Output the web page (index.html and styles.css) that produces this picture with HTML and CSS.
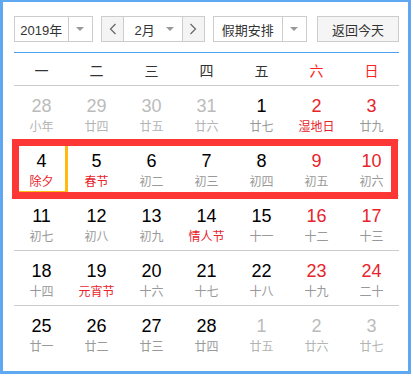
FILE: index.html
```html
<!DOCTYPE html>
<html lang="zh-CN">
<head>
    <meta charset="UTF-8">
    <meta name="viewport" content="width=device-width, initial-scale=1.0">
    <title>万年历</title>
    <link rel="stylesheet" href="styles.css">
</head>
<body>
    <div class="calendar">
        <div class="toolbar">
            <div class="select year">
                <span class="select-value">2019年</span>
                <span class="select-arrow"><i class="caret"></i></span>
            </div>
            <div class="month-group">
                <button class="nav-btn">
                    <svg width="8" height="12" viewBox="0 0 8 12"><polyline points="6.5,1 1.5,6 6.5,11" fill="none" stroke="#666" stroke-width="1.2"/></svg>
                </button>
                <div class="month">
                    <span>2月</span>
                    <i class="caret"></i>
                </div>
                <button class="nav-btn">
                    <svg width="8" height="12" viewBox="0 0 8 12"><polyline points="1.5,1 6.5,6 1.5,11" fill="none" stroke="#666" stroke-width="1.2"/></svg>
                </button>
            </div>
            <div class="select holiday">
                <span class="select-value">假期安排</span>
                <span class="select-arrow"><i class="caret"></i></span>
            </div>
            <button class="today-btn">返回今天</button>
        </div>

        <div class="weekdays">
            <span>一</span>
            <span>二</span>
            <span>三</span>
            <span>四</span>
            <span>五</span>
            <span class="weekend">六</span>
            <span class="weekend">日</span>
        </div>

        <div class="week">
            <div class="day other"><b>28</b><small>小年</small></div>
            <div class="day other"><b>29</b><small>廿四</small></div>
            <div class="day other"><b>30</b><small>廿五</small></div>
            <div class="day other"><b>31</b><small>廿六</small></div>
            <div class="day"><b>1</b><small>廿七</small></div>
            <div class="day weekend"><b>2</b><small class="festival">湿地日</small></div>
            <div class="day weekend"><b>3</b><small>廿九</small></div>
        </div>

        <div class="week current">
            <div class="day selected"><b>4</b><small class="festival">除夕</small></div>
            <div class="day"><b>5</b><small class="festival">春节</small></div>
            <div class="day"><b>6</b><small>初二</small></div>
            <div class="day"><b>7</b><small>初三</small></div>
            <div class="day"><b>8</b><small>初四</small></div>
            <div class="day weekend"><b>9</b><small>初五</small></div>
            <div class="day weekend"><b>10</b><small>初六</small></div>
        </div>

        <div class="week">
            <div class="day"><b>11</b><small>初七</small></div>
            <div class="day"><b>12</b><small>初八</small></div>
            <div class="day"><b>13</b><small>初九</small></div>
            <div class="day"><b>14</b><small class="festival">情人节</small></div>
            <div class="day"><b>15</b><small>十一</small></div>
            <div class="day weekend"><b>16</b><small>十二</small></div>
            <div class="day weekend"><b>17</b><small>十三</small></div>
        </div>

        <div class="week">
            <div class="day"><b>18</b><small>十四</small></div>
            <div class="day"><b>19</b><small class="festival">元宵节</small></div>
            <div class="day"><b>20</b><small>十六</small></div>
            <div class="day"><b>21</b><small>十七</small></div>
            <div class="day"><b>22</b><small>十八</small></div>
            <div class="day weekend"><b>23</b><small>十九</small></div>
            <div class="day weekend"><b>24</b><small>二十</small></div>
        </div>

        <div class="week last">
            <div class="day"><b>25</b><small>廿一</small></div>
            <div class="day"><b>26</b><small>廿二</small></div>
            <div class="day"><b>27</b><small>廿三</small></div>
            <div class="day"><b>28</b><small>廿四</small></div>
            <div class="day other"><b>1</b><small>廿五</small></div>
            <div class="day other"><b>2</b><small>廿六</small></div>
            <div class="day other"><b>3</b><small>廿七</small></div>
        </div>
    </div>
</body>
</html>
```

FILE: styles.css
```css
* {
    box-sizing: border-box;
}

body {
    margin: 0;
    padding: 0;
    background: #fff;
    font-family: "Liberation Sans", "Noto Sans CJK SC", sans-serif;
    color: #333;
}

.calendar {
    width: 411px;
    height: 374px;
    border: 3px solid #5ea9f2;
    border-top-width: 2px;
    padding: 14px 9px 0 11px;
    background: #fff;
}

.toolbar {
    display: flex;
    height: 26px;
    margin-bottom: 10px;
    font-size: 13px;
}

.select,
.month-group {
    display: flex;
    height: 26px;
    border: 1px solid #ccc;
    background: #fff;
}

.select-value {
    display: flex;
    align-items: center;
    justify-content: center;
    border-right: 1px solid #ccc;
}

.select-arrow {
    display: flex;
    align-items: center;
    justify-content: center;
    width: 24px;
}

.caret {
    width: 0;
    height: 0;
    border-left: 4px solid transparent;
    border-right: 4px solid transparent;
    border-top: 4px solid #999;
}

.year {
    width: 79px;
}

.year .select-value {
    width: 55px;
}

.month-group {
    width: 104px;
    margin-left: 8px;
}

.nav-btn {
    display: flex;
    align-items: center;
    justify-content: center;
    width: 22px;
    padding: 0;
    border: 0;
    background: #f4f4f4;
}

.month {
    display: flex;
    align-items: center;
    justify-content: space-between;
    width: 60px;
    padding: 0 8px 0 10px;
    border-left: 1px solid #ccc;
    border-right: 1px solid #ccc;
}

.holiday {
    width: 94px;
    margin-left: 8px;
}

.holiday .select-value {
    width: 70px;
}

.today-btn {
    width: 82px;
    height: 26px;
    margin-left: 10px;
    padding: 0;
    border: 1px solid #ccc;
    background: #f5f5f5;
    font-family: inherit;
    font-size: 13px;
    color: #333;
}

.weekdays {
    display: grid;
    grid-template-columns: repeat(7, 55px);
    height: 34px;
    padding-top: 3px;
    border-top: 1px solid #4fa3f3;
    border-bottom: 1px solid #ccc;
    font-family: "Noto Sans CJK SC", sans-serif;
    font-size: 14px;
    line-height: 28px;
    text-align: center;
    color: #333;
}

.weekdays .weekend {
    color: #f22;
}

.week {
    position: relative;
    display: grid;
    grid-template-columns: repeat(7, 55px);
    height: 55px;
    border-bottom: 1px solid #ccc;
}

.week.last {
    border-bottom: 0;
}

.week.current::after {
    content: "";
    position: absolute;
    top: -2px;
    left: -2px;
    right: 1px;
    bottom: -4px;
    border: 7px solid #fd3636;
}

.day {
    position: relative;
    display: flex;
    flex-direction: column;
    align-items: center;
    padding-top: 10px;
}

.day b {
    font-family: "Liberation Sans", sans-serif;
    font-size: 18px;
    font-weight: normal;
    line-height: 20px;
    color: #000;
}

.day small {
    font-family: "Noto Sans CJK SC", sans-serif;
    font-size: 12px;
    line-height: 20px;
    color: #999;
}

.day.weekend b {
    color: #e8232b;
}

.day small.festival {
    color: #e8232b;
}

.day.other b {
    color: #bbb;
}

.day.other small {
    color: #b4b4b4;
}

.day.selected::before {
    content: "";
    position: absolute;
    top: 0;
    left: 0;
    right: 1px;
    bottom: 1px;
    border: 3px solid #ffb910;
}
```
